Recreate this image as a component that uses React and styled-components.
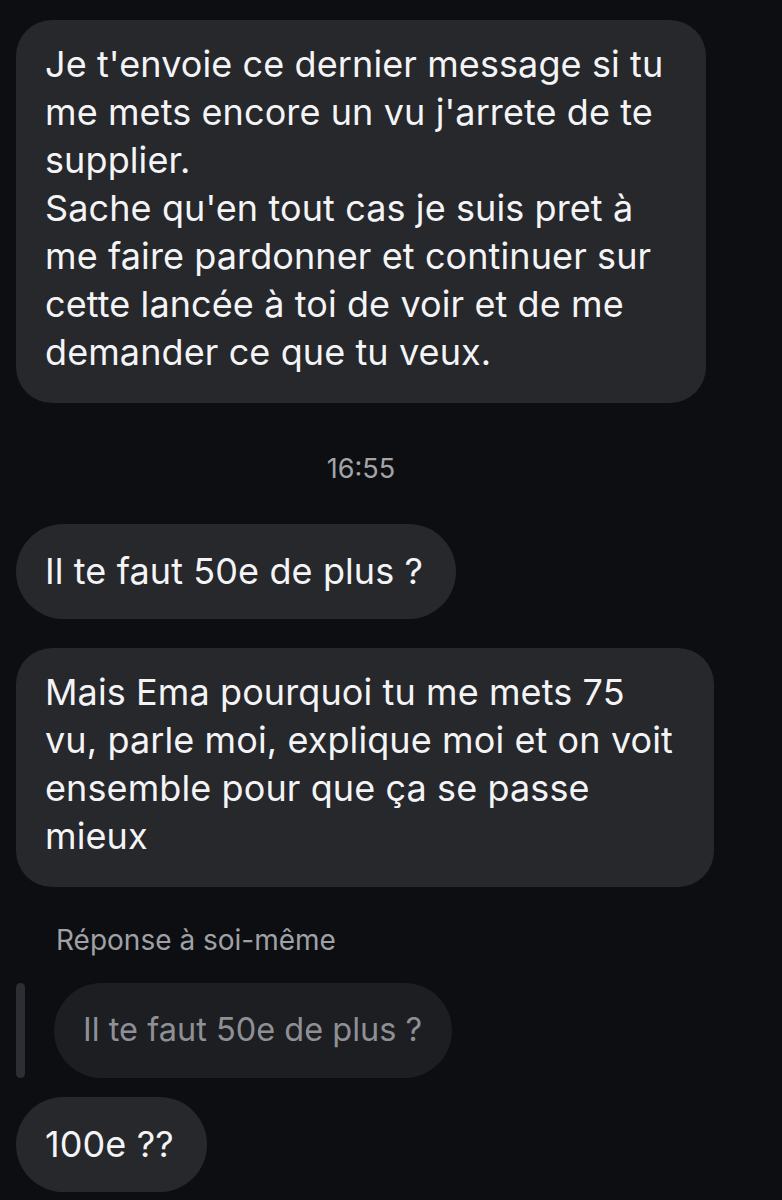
import styled, { createGlobalStyle } from "styled-components";

const GlobalStyle = createGlobalStyle`
    html, body {
        margin: 0;
        padding: 0;
        background: #0c0e12;
    }
    body {
        font-family: Inter, "Noto Sans", "Liberation Sans", sans-serif;
        -webkit-font-smoothing: antialiased;
    }
`;

const Thread = styled.div`
    width: 782px;
    height: 1200px;
    box-sizing: border-box;
    padding: 20px 0 0 16px;
    display: flex;
    flex-direction: column;
    align-items: flex-start;
    overflow: hidden;
`;

const Bubble = styled.div`
    box-sizing: border-box;
    width: ${(p) => (p.width ? `${p.width}px` : "auto")};
    margin-top: ${(p) => p.top || 0}px;
    padding: ${(p) => (p.pill ? "23px 33px 24px 29px" : "20px 28px 27px 29px")};
    border-radius: ${(p) => (p.pill ? "48px" : "36px")};
    background: #26282c;
    color: #f4f4f6;
    font-size: 36px;
    line-height: 48px;
    letter-spacing: 0.1px;
    white-space: pre-line;
`;

const Timestamp = styled.div`
    width: 690px;
    margin-top: 49px;
    text-align: center;
    font-size: 27px;
    line-height: 34px;
    color: #a3a4a9;
`;

const ReplyLabel = styled.div`
    margin-top: 36px;
    padding-left: 40px;
    font-size: 28px;
    line-height: 34px;
    color: #a0a1a6;
`;

const ReplyRow = styled.div`
    margin-top: 26px;
    display: flex;
    align-items: stretch;
    gap: 29px;
`;

const ReplyBar = styled.div`
    width: 9px;
    border-radius: 5px;
    background: #2c2e33;
`;

const Quoted = styled.div`
    box-sizing: border-box;
    height: 95px;
    padding: 23px 30px 0 29px;
    border-radius: 48px;
    background: #1c1e22;
    color: #8f9095;
    font-size: 32.5px;
    line-height: 48px;
`;

export default function App() {
    return (
        <>
            <GlobalStyle />
            <Thread>
                <Bubble width={690}>
                    {"Je t'envoie ce dernier message si tu\nme mets encore un vu j'arrete de te\nsupplier.\nSache qu'en tout cas je suis pret à\nme faire pardonner et continuer sur\ncette lancée à toi de voir et de me\ndemander ce que tu veux."}
                </Bubble>
                <Timestamp>16:55</Timestamp>
                <Bubble pill top={38}>Il te faut 50e de plus ?</Bubble>
                <Bubble width={698} top={29}>
                    {"Mais Ema pourquoi tu me mets 75\nvu, parle moi, explique moi et on voit\nensemble pour que ça se passe\nmieux"}
                </Bubble>
                <ReplyLabel>Réponse à soi-même</ReplyLabel>
                <ReplyRow>
                    <ReplyBar />
                    <Quoted>Il te faut 50e de plus ?</Quoted>
                </ReplyRow>
                <Bubble pill top={19}>100e ??</Bubble>
            </Thread>
        </>
    );
}
